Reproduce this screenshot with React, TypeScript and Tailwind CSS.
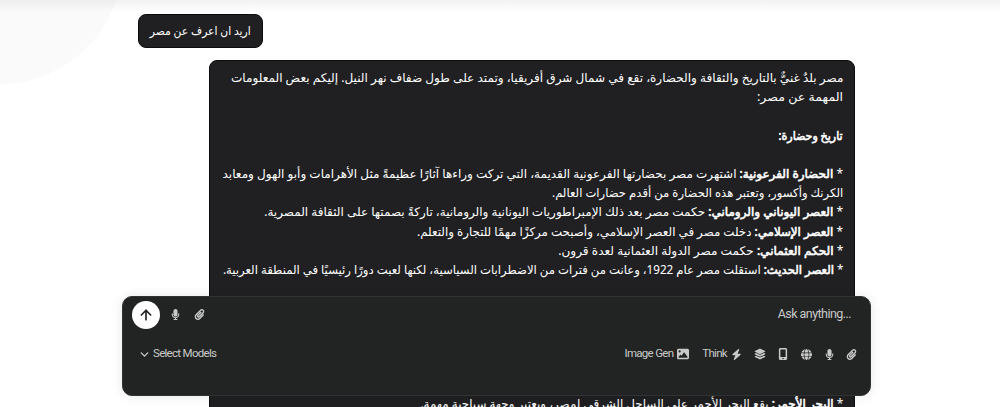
import { FaPaperclip } from 'react-icons/fa';
import { FaBolt, FaGlobe, FaImage, FaLayerGroup, FaMicrophone, FaMobileScreenButton } from 'react-icons/fa6';
import { LuArrowUp, LuChevronDown } from 'react-icons/lu';

type Line = { title?: string; text?: string; bullet?: boolean; fit?: string };

const answer: Line[] = [
  { text: 'مصر بلدٌ غنيٌّ بالتاريخ والثقافة والحضارة، تقع في شمال شرق أفريقيا، وتمتد على طول ضفاف نهر النيل. إليكم بعض المعلومات', fit: 'scale-x-[1.005]' },
  { text: 'المهمة عن مصر:', fit: 'scale-x-[1.05]' },
  {},
  { title: 'تاريخ وحضارة:', fit: 'scale-x-[0.92]' },
  {},
  { bullet: true, title: 'الحضارة الفرعونية:', text: 'اشتهرت مصر بحضارتها الفرعونية القديمة، التي تركت وراءها آثارًا عظيمةً مثل الأهرامات وأبو الهول ومعابد' },
  { text: 'الكرنك وأكسور، وتعتبر هذه الحضارة من أقدم حضارات العالم.', fit: 'scale-x-[0.97]' },
  { bullet: true, title: 'العصر اليوناني والروماني:', text: 'حكمت مصر بعد ذلك الإمبراطوريات اليونانية والرومانية، تاركةً بصمتها على الثقافة المصرية.' },
  { bullet: true, title: 'العصر الإسلامي:', text: 'دخلت مصر في العصر الإسلامي، وأصبحت مركزًا مهمًا للتجارة والتعلم.', fit: 'scale-x-[0.986]' },
  { bullet: true, title: 'الحكم العثماني:', text: 'حكمت مصر الدولة العثمانية لعدة قرون.', fit: 'scale-x-[1.01]' },
  { bullet: true, title: 'العصر الحديث:', text: 'استقلت مصر عام 1922، وعانت من فترات من الاضطرابات السياسية، لكنها لعبت دورًا رئيسيًا في المنطقة العربية.', fit: 'scale-x-[0.972]' },
  {},
  {},
  {},
  {},
  {},
  {},
  { bullet: true, title: 'البحر الأحمر:', text: 'يقع البحر الأحمر على الساحل الشرقي لمصر، ويعتبر وجهة سياحية مهمة.', fit: 'scale-x-[0.992]' },
];

function AnswerLine({ line }: { line: Line }) {
  return (
    <p className="h-[19.2px] whitespace-nowrap">
      <span className={`inline-block origin-right ${line.fit ?? ''}`}>
        {line.bullet && '* '}
        {line.title && <span className="[-webkit-text-stroke:0.6px_white]">{line.title} </span>}
        {line.text}
      </span>
    </p>
  );
}

function Composer() {
  return (
    <form className="absolute left-[122px] top-[296px] h-[100px] w-[749px] rounded-[10px] border border-[#303234] bg-[#222423] font-[Roboto,sans-serif] text-[#c9c9c9] shadow-[0_0_12px_rgba(0,0,0,0.1)]">
      <div className="flex h-[35px] items-center pl-[9px] pr-[19px]">
        <button type="button" className="flex size-7 items-center justify-center rounded-full bg-white text-[#222]">
          <LuArrowUp size={16} strokeWidth={2.5} />
        </button>
        <FaMicrophone size={11} className="ml-[10px]" />
        <FaPaperclip size={11} className="ml-[13px]" />
        <span className="ml-auto text-[12.5px] tracking-[-0.55px]">Ask anything...</span>
      </div>
      <div className="mt-[12px] flex h-5 items-center pl-[15px] pr-[13px] text-[11.5px] tracking-[-0.7px]">
        <LuChevronDown size={13} strokeWidth={2.5} />
        <span className="ml-[2px]">Select Models</span>
        <span className="ml-auto">Image Gen</span>
        <FaImage size={12} className="ml-[4px]" />
        <span className="ml-[13px]">Think</span>
        <FaBolt size={11} className="ml-[4px]" />
        <FaLayerGroup size={12} className="ml-[12px]" />
        <FaMobileScreenButton size={12} className="ml-[11px]" />
        <FaGlobe size={11} className="ml-[12px]" />
        <FaMicrophone size={11} className="ml-[12px]" />
        <FaPaperclip size={11} className="ml-[11px]" />
      </div>
    </form>
  );
}

export default function App() {
  return (
    <div className="relative h-[407px] overflow-hidden bg-white font-['Noto_Sans','DejaVu_Sans',sans-serif]">
      <div className="absolute -left-[124px] -top-[163px] size-[247px] rounded-full bg-[#fafafa]" />
      <div className="absolute inset-x-0 top-0 h-3 bg-linear-to-b from-black/5 to-transparent" />
      <main dir="rtl" className="relative flex flex-col pt-[14px] text-[12px] leading-[19.2px] text-white">
        <div className="mr-[737px] flex h-[34px] w-[125px] items-center rounded-lg border border-[#0c0c0d] bg-[#202022] px-[11px]">
          <span className="inline-block origin-right scale-x-[0.895] whitespace-nowrap">اريد ان اعرف عن مصر</span>
        </div>
        <div className="mr-[145px] mt-3 w-[646px] rounded-lg border border-[#0c0c0d] bg-[#202022] px-[11px] py-[7px]">
          {answer.map((line, i) => (
            <AnswerLine key={i} line={line} />
          ))}
        </div>
      </main>
      <Composer />
    </div>
  );
}
